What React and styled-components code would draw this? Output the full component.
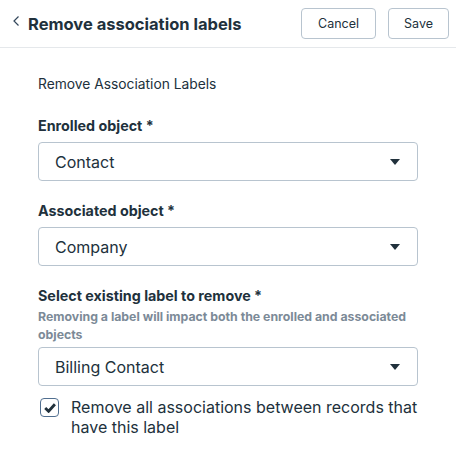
import React from "react";
import styled, { createGlobalStyle } from "styled-components";

const Global = createGlobalStyle`
  body {
    margin: 0;
    background: #fff;
    font-family: Inter, "Noto Sans", sans-serif;
    color: #21313c;
  }
`;

const Page = styled.div`
  width: 456px;
  height: 473px;
  overflow: hidden;
`;

const Header = styled.div`
  display: flex;
  align-items: center;
  height: 47px;
  padding: 0 7px 0 13px;
  border-bottom: 1px solid #e5e8eb;
`;

const Back = styled.svg`
  width: 6px;
  height: 10px;
  margin-right: 9px;
  margin-top: -6px;
`;

const Title = styled.h1`
  flex: 1;
  margin: 0;
  font-size: 16.5px;
  font-weight: 700;
  color: #21313c;
`;

const Btn = styled.button`
  height: 31px;
  padding: 0 ${(p) => p.$pad}px;
  margin-left: 12px;
  border: 1px solid #b8c4cf;
  border-radius: 4px;
  background: #fff;
  font-family: inherit;
  font-size: 12.5px;
  color: #21313c;
`;

const Body = styled.div`
  padding: 28px 38px 0 38px;
  display: flex;
  flex-direction: column;
`;

const Intro = styled.p`
  margin: 0 0 25px;
  font-size: 13.8px;
  color: #21313c;
`;

const Field = styled.div`
  display: flex;
  flex-direction: column;
  margin-bottom: 21px;
`;

const Label = styled.label`
  font-size: 14.3px;
  font-weight: 700;
  margin-bottom: 8px;
`;

const Help = styled.div`
  font-size: 12.3px;
  font-weight: 700;
  color: #7c8a97;
  line-height: 18px;
  margin: -4px 0 3px;
`;

const Select = styled.div`
  height: 37px;
  border: 1px solid #b8c4cf;
  border-radius: 4px;
  display: flex;
  align-items: center;
  justify-content: space-between;
  padding: 0 17px 0 16px;
  font-size: 16px;
  color: #21313c;
`;

const Caret = styled.svg`
  width: 10px;
  height: 6px;
`;

const CheckRow = styled.div`
  display: flex;
  align-items: flex-start;
  gap: 12px;
  margin-top: -10px;
  padding-left: 2px;
`;

const Box = styled.div`
  flex: none;
  width: 17px;
  height: 17px;
  border: 1px solid #516f90;
  border-radius: 4px;
  display: flex;
  align-items: center;
  justify-content: center;
  margin-top: 1px;
`;

const CheckText = styled.span`
  font-size: 16px;
  line-height: 20px;
  color: #21313c;
`;

function Dropdown({ value }) {
  return (
    <Select>
      <span>{value}</span>
      <Caret viewBox="0 0 10 6">
        <path d="M0 0h10L5 6z" fill="#21313c" />
      </Caret>
    </Select>
  );
}

export default function App() {
  return (
    <Page>
      <Global />
      <Header>
        <Back viewBox="0 0 6 10">
          <path d="M5.5 0.5L1 5l4.5 4.5" fill="none" stroke="#33475b" strokeWidth="1.2" />
        </Back>
        <Title>Remove association labels</Title>
        <Btn $pad={16}>Cancel</Btn>
        <Btn $pad={15}>Save</Btn>
      </Header>
      <Body>
        <Intro>Remove Association Labels</Intro>
        <Field>
          <Label>Enrolled object *</Label>
          <Dropdown value="Contact" />
        </Field>
        <Field>
          <Label>Associated object *</Label>
          <Dropdown value="Company" />
        </Field>
        <Field>
          <Label>Select existing label to remove *</Label>
          <Help>Removing a label will impact both the enrolled and associated objects</Help>
          <Dropdown value="Billing Contact" />
        </Field>
        <CheckRow>
          <Box>
            <svg width="12" height="10" viewBox="0 0 12 10">
              <path d="M1.2 5l3.4 3.3L10.9 1.2" fill="none" stroke="#21313c" strokeWidth="2.8" />
            </svg>
          </Box>
          <CheckText>Remove all associations between records that have this label</CheckText>
        </CheckRow>
      </Body>
    </Page>
  );
}
